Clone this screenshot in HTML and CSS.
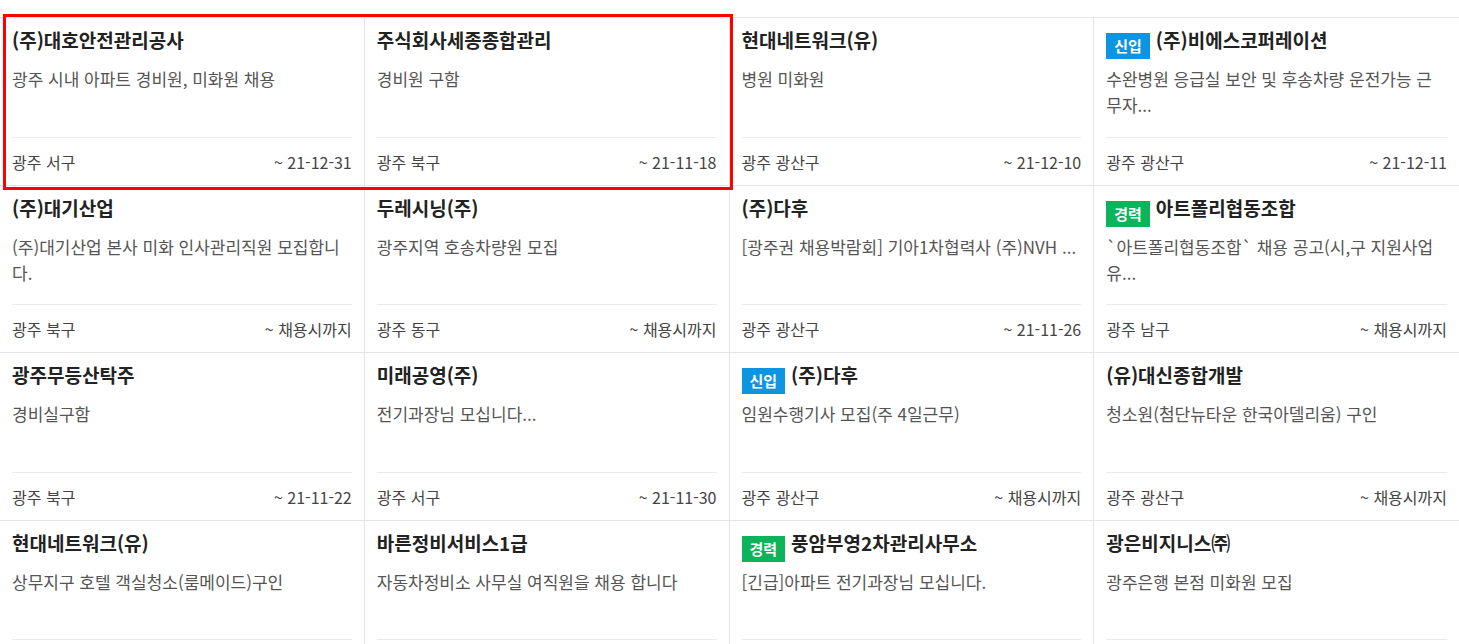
FILE: index.html
```html
<!DOCTYPE html>
<html lang="ko">
   <head>
		<meta charset="utf-8">
		<meta name="viewport" content="initial-scale=1, width=device-width">
		<title>채용정보</title>
		<link rel="stylesheet" href="styles.css">
   </head>
   <body>
		<div class="jobs">
			<div class="mark"></div>
			<div class="job">
				<div class="title">(주)대호안전관리공사</div>
				<div class="desc">광주 시내 아파트 경비원, 미화원 채용</div>
				<div class="foot"><span>광주 서구</span><span>~ 21-12-31</span></div>
			</div>
			<div class="job">
				<div class="title">주식회사세종종합관리</div>
				<div class="desc">경비원 구함</div>
				<div class="foot"><span>광주 북구</span><span>~ 21-11-18</span></div>
			</div>
			<div class="job">
				<div class="title">현대네트워크(유)</div>
				<div class="desc">병원 미화원</div>
				<div class="foot"><span>광주 광산구</span><span>~ 21-12-10</span></div>
			</div>
			<div class="job">
				<div class="title"><span class="tag new">신입</span>(주)비에스코퍼레이션</div>
				<div class="desc">수완병원 응급실 보안 및 후송차량 운전가능 근무자...</div>
				<div class="foot"><span>광주 광산구</span><span>~ 21-12-11</span></div>
			</div>

			<div class="job">
				<div class="title">(주)대기산업</div>
				<div class="desc">(주)대기산업 본사 미화 인사관리직원 모집합니다.</div>
				<div class="foot"><span>광주 북구</span><span>~ 채용시까지</span></div>
			</div>
			<div class="job">
				<div class="title">두레시닝(주)</div>
				<div class="desc">광주지역 호송차량원 모집</div>
				<div class="foot"><span>광주 동구</span><span>~ 채용시까지</span></div>
			</div>
			<div class="job">
				<div class="title">(주)다후</div>
				<div class="desc">[광주권 채용박람회] 기아1차협력사 (주)NVH ...</div>
				<div class="foot"><span>광주 광산구</span><span>~ 21-11-26</span></div>
			</div>
			<div class="job">
				<div class="title"><span class="tag exp">경력</span>아트폴리협동조합</div>
				<div class="desc">`아트폴리협동조합` 채용 공고(시,구 지원사업 유...</div>
				<div class="foot"><span>광주 남구</span><span>~ 채용시까지</span></div>
			</div>

			<div class="job">
				<div class="title">광주무등산탁주</div>
				<div class="desc">경비실구함</div>
				<div class="foot"><span>광주 북구</span><span>~ 21-11-22</span></div>
			</div>
			<div class="job">
				<div class="title">미래공영(주)</div>
				<div class="desc">전기과장님 모십니다...</div>
				<div class="foot"><span>광주 서구</span><span>~ 21-11-30</span></div>
			</div>
			<div class="job">
				<div class="title"><span class="tag new">신입</span>(주)다후</div>
				<div class="desc">임원수행기사 모집(주 4일근무)</div>
				<div class="foot"><span>광주 광산구</span><span>~ 채용시까지</span></div>
			</div>
			<div class="job">
				<div class="title">(유)대신종합개발</div>
				<div class="desc">청소원(첨단뉴타운 한국아델리움) 구인</div>
				<div class="foot"><span>광주 광산구</span><span>~ 채용시까지</span></div>
			</div>

			<div class="job">
				<div class="title">현대네트워크(유)</div>
				<div class="desc">상무지구 호텔 객실청소(룸메이드)구인</div>
				<div class="foot"><span>광주 서구</span><span>~ 채용시까지</span></div>
			</div>
			<div class="job">
				<div class="title">바른정비서비스1급</div>
				<div class="desc">자동차정비소 사무실 여직원을 채용 합니다</div>
				<div class="foot"><span>광주 북구</span><span>~ 21-11-30</span></div>
			</div>
			<div class="job">
				<div class="title"><span class="tag exp">경력</span>풍암부영2차관리사무소</div>
				<div class="desc">[긴급]아파트 전기과장님 모십니다.</div>
				<div class="foot"><span>광주 서구</span><span>~ 채용시까지</span></div>
			</div>
			<div class="job">
				<div class="title">광은비지니스㈜</div>
				<div class="desc">광주은행 본점 미화원 모집</div>
				<div class="foot"><span>광주 동구</span><span>~ 21-12-15</span></div>
			</div>
		</div>
   </body>
</html>
```

FILE: styles.css
```css
* {
	box-sizing: border-box;
}

html, body {
	margin: 0;
	padding: 0;
	background: #fff;
	font-family: "Noto Sans CJK KR", "Noto Sans", sans-serif;
	color: #333;
	overflow: hidden;
}

.jobs {
	position: relative;
	margin-top: 17px;
	border-top: 1px solid #e5e5e5;
	display: grid;
	grid-template-columns: repeat(4, 1fr);
}

.mark {
	position: absolute;
	left: 3px;
	top: -4px;
	width: 730px;
	height: 176px;
	border: 3px solid #ff0000;
	pointer-events: none;
	z-index: 2;
}

.job {
	height: 167.5px;
	padding: 9px 12px 0;
	border-right: 1px solid #e5e5e5;
	border-bottom: 1px solid #e5e5e5;
	display: flex;
	flex-direction: column;
}

.job:nth-child(4n+1) {
	border-right: 0;
}

.title {
	font-size: 19px;
	font-weight: bold;
	line-height: 26px;
	height: 26px;
	color: #222;
	white-space: nowrap;
}

.tag {
	display: inline-block;
	height: 26px;
	line-height: 26px;
	padding: 0 8px;
	margin-right: 6px;
	font-size: 15px;
	color: #fff;
	vertical-align: -4px;
}

.tag.new {
	background: #0d95e1;
}

.tag.exp {
	background: #0bb35a;
}

.desc {
	flex: 1;
	margin-top: 13px;
	font-size: 17px;
	line-height: 26px;
	color: #555;
	word-break: break-all;
	display: -webkit-box;
	-webkit-line-clamp: 2;
	-webkit-box-orient: vertical;
	overflow: hidden;
}

.foot {
	border-top: 1px solid #ebebeb;
	padding: 11px 0 10px;
	display: flex;
	justify-content: space-between;
	font-size: 16px;
	line-height: 26px;
	color: #444;
}
```
